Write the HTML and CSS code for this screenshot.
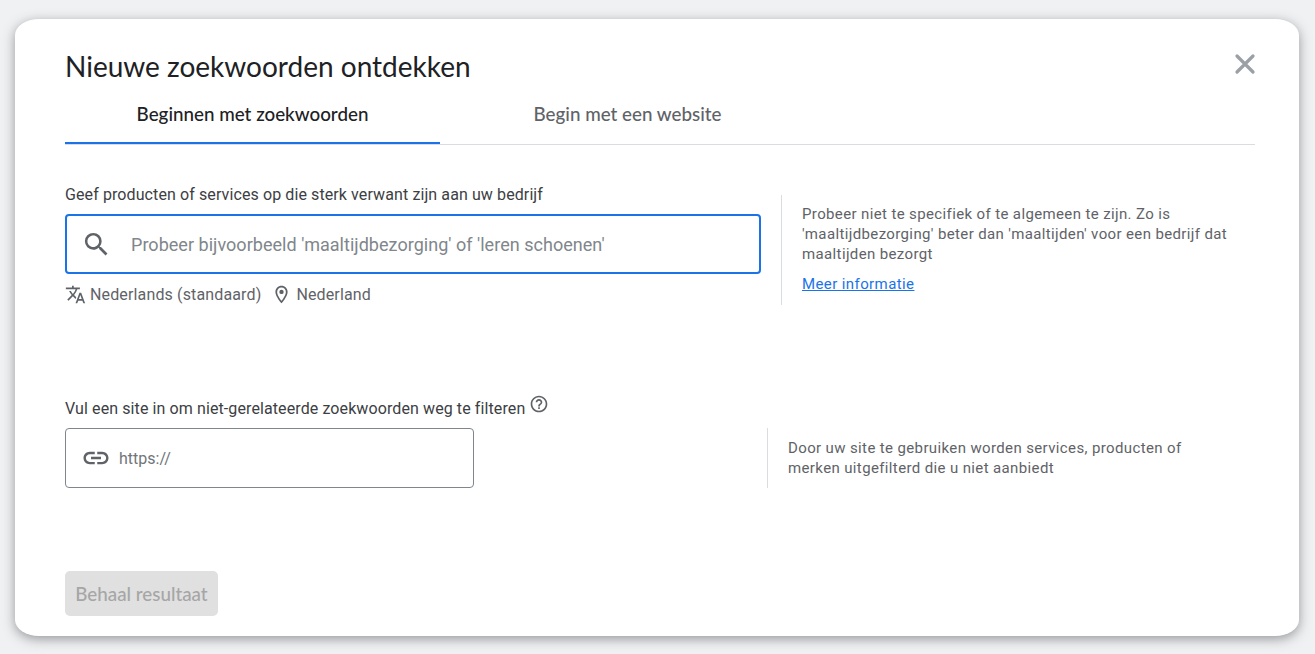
FILE: index.html
```html
<!DOCTYPE html>
<html lang="nl">
<head>
<meta charset="utf-8">
<title>Nieuwe zoekwoorden ontdekken</title>
<link rel="stylesheet" href="styles.css">
</head>
<body>
<main class="dialog">
  <header class="dialog-head">
    <h1 class="title">Nieuwe zoekwoorden ontdekken</h1>
    <button class="close" aria-label="Sluiten">
      <svg viewBox="0 0 24 24" width="30" height="30"><path d="M5.6 5.6l12.8 12.8M18.4 5.6L5.6 18.4" fill="none" stroke="#9aa0a6" stroke-width="2.6" stroke-linecap="round"/></svg>
    </button>
  </header>
  <nav class="tabs">
    <div class="tab tab-active">Beginnen met zoekwoorden</div>
    <div class="tab">Begin met een website</div>
  </nav>

  <section class="row row-first">
    <div class="field-col">
      <label class="label">Geef producten of services op die sterk verwant zijn aan uw bedrijf</label>
      <div class="search-box">
        <svg class="search-icon" viewBox="0 0 24 24" width="31" height="31"><path fill="#5f6368" d="M15.5 14h-.79l-.28-.27A6.47 6.47 0 0 0 16 9.5 6.5 6.5 0 1 0 9.5 16c1.61 0 3.09-.59 4.23-1.57l.27.28v.79l5 4.99L20.49 19l-4.99-5zm-6 0C7.01 14 5 11.99 5 9.5S7.01 5 9.5 5 14 7.01 14 9.5 11.99 14 9.5 14z"/></svg>
        <span class="placeholder">Probeer bijvoorbeeld 'maaltijdbezorging' of 'leren schoenen'</span>
      </div>
      <div class="meta">
        <svg viewBox="0 0 24 24" width="21" height="21"><path fill="#5f6368" d="M12.87 15.07l-2.54-2.51.03-.03A17.52 17.52 0 0 0 14.07 6H17V4h-7V2H8v2H1v1.99h11.17C11.5 7.92 10.44 9.75 9 11.35 8.07 10.32 7.3 9.19 6.69 8h-2c.73 1.63 1.73 3.17 2.98 4.56l-5.09 5.02L4 19l5-5 3.11 3.11.76-2.04zM18.5 10h-2L12 22h2l1.12-3h4.75L21 22h2l-4.5-12zm-2.62 7l1.62-4.33L19.12 17h-3.24z"/></svg>
        <span class="meta-text">Nederlands (standaard)</span>
        <svg class="pin" viewBox="0 0 24 24" width="21" height="21"><path fill="#5f6368" d="M12 2C8.13 2 5 5.13 5 9c0 5.25 7 13 7 13s7-7.75 7-13c0-3.87-3.13-7-7-7zm0 17.1C10 16.5 7 12.1 7 9c0-2.76 2.24-5 5-5s5 2.24 5 5c0 3.1-3 7.5-5 10.1z"/><circle fill="#5f6368" cx="12" cy="9" r="2.5"/></svg>
        <span class="meta-text">Nederland</span>
      </div>
    </div>
    <aside class="help help-first">
      <p class="help-text">Probeer niet te specifiek of te algemeen te zijn. Zo is 'maaltijdbezorging' beter dan 'maaltijden' voor een bedrijf dat maaltijden bezorgt</p>
      <a class="help-link" href="#">Meer informatie</a>
    </aside>
  </section>

  <section class="row row-second">
    <div class="site-col">
      <div class="label label-site">
        <span>Vul een site in om niet-gerelateerde zoekwoorden weg te filteren</span>
        <svg class="help-icon" viewBox="0 0 24 24" width="20" height="20"><path fill="#5f6368" d="M11 18h2v-2h-2v2zm1-16C6.48 2 2 6.48 2 12s4.48 10 10 10 10-4.48 10-10S17.52 2 12 2zm0 18c-4.41 0-8-3.59-8-8s3.59-8 8-8 8 3.59 8 8-3.59 8-8 8zm0-14c-2.21 0-4 1.79-4 4h2c0-1.1.9-2 2-2s2 .9 2 2c0 2-3 1.75-3 5h2c0-2.25 3-2.5 3-5 0-2.21-1.79-4-4-4z"/></svg>
      </div>
      <div class="url-row">
        <div class="url-box">
          <svg viewBox="0 0 24 24" width="30" height="30"><path fill="#5f6368" d="M3.9 12c0-1.71 1.39-3.1 3.1-3.1h4V7H7c-2.76 0-5 2.24-5 5s2.24 5 5 5h4v-1.9H7c-1.71 0-3.1-1.39-3.1-3.1zM8 13h8v-2H8v2zm9-6h-4v1.9h4c1.71 0 3.1 1.39 3.1 3.1s-1.39 3.1-3.1 3.1h-4V17h4c2.76 0 5-2.24 5-5s-2.24-5-5-5z"/></svg>
          <span class="url-text">https://</span>
        </div>
        <aside class="help help-second">
          <p class="help-text">Door uw site te gebruiken worden services, producten of merken uitgefilterd die u niet aanbiedt</p>
        </aside>
      </div>
    </div>
  </section>

  <button class="submit" disabled>Behaal resultaat</button>
</main>
</body>
</html>
```
FILE: styles.css
```css
* { box-sizing: border-box; }
html, body { height: 100%; }
body {
  margin: 0;
  padding: 19px 16px 18px 15px;
  background: #f0f1f3;
  font-family: Roboto, "Liberation Sans", sans-serif;
  overflow: hidden;
}
.dialog {
  height: 617px;
  background: #fff;
  border-radius: 24px / 16px;
  box-shadow: 0 3px 12px rgba(60, 64, 67, .5);
  padding: 28px 44px 0 50px;
  display: flex;
  flex-direction: column;
}
.dialog-head {
  display: flex;
  justify-content: space-between;
  align-items: flex-start;
  height: 49px;
  flex: none;
}
.title {
  margin: 0;
  font: 400 28px/38px Lato, sans-serif;
  color: #202124;
}
.close {
  border: 0;
  padding: 0;
  background: none;
  width: 30px;
  height: 30px;
  margin-top: 2px;
  margin-right: -5px;
}
.close svg, .search-box svg, .meta svg, .url-box svg, .label svg { display: block; flex: none; }
.tabs {
  display: flex;
  flex: none;
  height: 49px;
  border-bottom: 1px solid #dadce0;
}
.tab {
  width: 375px;
  height: 48px;
  text-align: center;
  font: 500 18.8px/36px Lato, sans-serif;
  color: #5f6368;
}
.tab-active {
  color: #202124;
  border-bottom: 2px solid #1a73e8;
}
.row { display: flex; }
.row-first { margin-top: 40px; height: 120px; flex: none; }
.field-col { width: 696px; }
.label {
  font-size: 16px;
  line-height: 20px;
  letter-spacing: .1px;
  color: #3c4043;
  display: block;
}
.search-box {
  margin-top: 9px;
  height: 60px;
  border: 2px solid #1a73e8;
  border-radius: 4px;
  display: flex;
  align-items: center;
  padding-left: 14px;
}
.placeholder {
  margin-left: 19px;
  font-size: 18px;
  letter-spacing: .03px;
  color: #80868b;
}
.meta {
  display: flex;
  align-items: center;
  height: 20px;
  margin-top: 10px;
  font-size: 16px;
  letter-spacing: .14px;
  color: #5f6368;
}
.meta-text { margin-left: 4px; }
.pin { margin-left: 10px; }
.meta .pin + .meta-text { margin-left: 4px; }
.help {
  border-left: 1px solid #dadce0;
}
.help-first {
  margin-left: 20px;
  margin-top: 10px;
  height: 110px;
  padding: 9px 20px;
  flex: 1;
}
.help-text {
  margin: 0;
  font-size: 15px;
  line-height: 20px;
  letter-spacing: .37px;
  color: #5f6368;
}
.help-link {
  display: block;
  margin-top: 10px;
  font-size: 15px;
  line-height: 20px;
  letter-spacing: .4px;
  color: #1a73e8;
}
.row-second { margin-top: 94px; flex: none; }
.site-col { flex: 1; }
.label-site { display: flex; align-items: flex-start; height: 29px; }
.help-icon { margin-left: 4px; margin-top: -5px; }
.url-row { display: flex; }
.url-box {
  width: 409px;
  height: 60px;
  border: 1px solid #80868b;
  border-radius: 4px;
  display: flex;
  align-items: center;
  padding-left: 15px;
  font-size: 16px;
  color: #70757a;
}
.url-text { margin-left: 8px; }
.help-second {
  margin-left: 293px;
  height: 60px;
  width: 470px;
  padding: 10px 20px;
}
.submit {
  margin-top: 83px;
  flex: none;
  width: 153px;
  height: 45px;
  border: 0;
  border-radius: 5px;
  background: #e0e0e0;
  color: #a6a6a6;
  font: 500 18.8px Lato, sans-serif;
  padding: 0;
}
```
